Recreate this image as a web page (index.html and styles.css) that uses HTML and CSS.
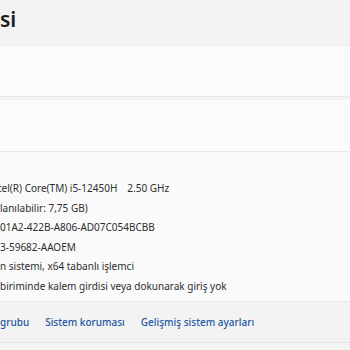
FILE: index.html
```html
<!DOCTYPE html>
<html lang="tr">
<head>
  <meta charset="UTF-8">
  <title>Hakkında</title>
  <link rel="stylesheet" href="styles.css">
</head>
<body>

<div class="baslik">
  <h1>si</h1>
</div>

<div class="kart kart-ust"></div>
<div class="kart kart-orta"></div>

<div class="kart ozellikler">
  <p class="ilk">tel(R) Core(TM) i5-12450H<span class="hiz">2.50 GHz</span></p>
  <p>lanılabilir: 7,75 GB)</p>
  <p>01A2-422B-A806-AD07C054BCBB</p>
  <p>3-59682-AAOEM</p>
  <p>n sistemi, x64 tabanlı işlemci</p>
  <p>biriminde kalem girdisi veya dokunarak giriş yok</p>
</div>

<div class="baglantilar">
  <a href="#">grubu</a>
  <a href="#">Sistem koruması</a>
  <a href="#">Gelişmiş sistem ayarları</a>
</div>

</body>
</html>
```

FILE: styles.css
```css
body {
  margin: 0;
  background-color: #f3f3f3;
  font-family: "Noto Sans", "Open Sans", sans-serif;
  overflow: hidden;
}
.baslik {
  height: 45px;
  border-bottom: 1px solid #ebebeb;
}
h1 {
  margin: 0;
  padding-top: 3px;
  font-size: 21px;
  font-weight: 600;
  color: #1b1b1b;
  line-height: 32px;
}
.kart {
  background-color: #fbfbfb;
  border-bottom: 1px solid #e8e8e8;
}
.kart-ust {
  height: 50px;
  margin-bottom: 3px;
}
.kart-orta {
  height: 51px;
}
.ozellikler {
  background-color: #fafafa;
  padding: 27px 0 5px;
  height: 117px;
}
.ozellikler p {
  margin: 0;
  font-size: 10px;
  line-height: 19.6px;
  color: #2e2e2e;
  white-space: nowrap;
}
.ozellikler .ilk {
  margin-left: -2px;
}
.hiz {
  margin-left: 10px;
}
.baglantilar {
  display: flex;
  gap: 16px;
  height: 40px;
  align-items: center;
  border-bottom: 1px solid #e5e5e5;
}
.baglantilar a {
  font-size: 10px;
  font-weight: 500;
  color: #1d57a0;
  text-decoration: none;
}
```
